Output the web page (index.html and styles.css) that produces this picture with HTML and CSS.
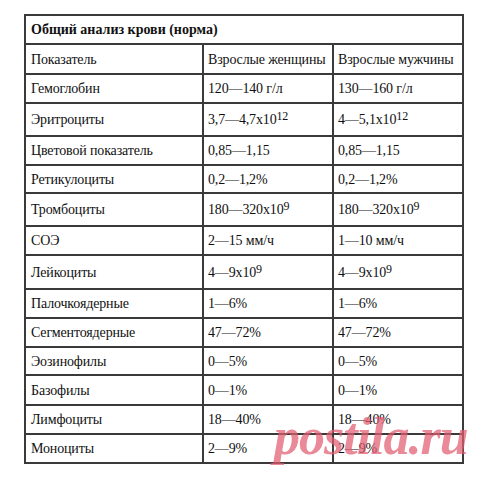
FILE: index.html
```html
<!DOCTYPE html>
<html>
<head>
<meta charset="utf-8">
<title>Общий анализ крови (норма)</title>
<link rel="stylesheet" href="styles.css">
</head>
<body>
<div class="page">
  <table class="norms">
    <colgroup>
      <col class="c1"><col class="c2"><col class="c3">
    </colgroup>
    <tr class="h29"><td colspan="3" class="title">Общий анализ крови (норма)</td></tr>
    <tr class="h30"><td>Показатель</td><td>Взрослые женщины</td><td>Взрослые мужчины</td></tr>
    <tr class="h29"><td>Гемоглобин</td><td>120—140 г/л</td><td>130—160 г/л</td></tr>
    <tr class="h33"><td>Эритроциты</td><td>3,7—4,7x10<sup>12</sup></td><td>4—5,1x10<sup>12</sup></td></tr>
    <tr class="h29"><td>Цветовой показатель</td><td>0,85—1,15</td><td>0,85—1,15</td></tr>
    <tr class="h28"><td>Ретикулоциты</td><td>0,2—1,2%</td><td>0,2—1,2%</td></tr>
    <tr class="h33"><td>Тромбоциты</td><td>180—320x10<sup>9</sup></td><td>180—320x10<sup>9</sup></td></tr>
    <tr class="h29"><td>СОЭ</td><td>2—15 мм/ч</td><td>1—10 мм/ч</td></tr>
    <tr class="h34"><td>Лейкоциты</td><td>4—9x10<sup>9</sup></td><td>4—9x10<sup>9</sup></td></tr>
    <tr class="h29"><td>Палочкоядерные</td><td>1—6%</td><td>1—6%</td></tr>
    <tr class="h29"><td>Сегментоядерные</td><td>47—72%</td><td>47—72%</td></tr>
    <tr class="h28"><td>Эозинофилы</td><td>0—5%</td><td>0—5%</td></tr>
    <tr class="h30"><td>Базофилы</td><td>0—1%</td><td>0—1%</td></tr>
    <tr class="h29"><td>Лимфоциты</td><td>18—40%</td><td>18—40%</td></tr>
    <tr class="h29"><td>Моноциты</td><td>2—9%</td><td>2—9%</td></tr>
  </table>
  <div class="watermark">postila.ru</div>
</div>
</body>
</html>
```

FILE: styles.css
```css
html, body {
  margin: 0;
  padding: 0;
  background: #ffffff;
}

.page {
  position: relative;
  width: 489px;
  height: 479px;
  padding: 14px 0 0 24px;
  box-sizing: border-box;
  font-family: "Liberation Serif", serif;
  color: #111111;
}

.norms {
  table-layout: fixed;
  width: 440px;
  border-collapse: separate;
  border-spacing: 0;
  border-top: 2px solid #3a3a3a;
  border-left: 2px solid #3a3a3a;
  font-size: 14px;
}

.c1 { width: 178px; }
.c2 { width: 130px; }
.c3 { width: 130px; }

.norms td {
  box-sizing: border-box;
  border-right: 2px solid #3a3a3a;
  border-bottom: 2px solid #3a3a3a;
  padding: 0 2px 0 4px;
  vertical-align: middle;
  white-space: nowrap;
  line-height: 17px;
  letter-spacing: -0.15px;
}

.norms td:first-child {
  padding-left: 5px;
}

.norms td.title {
  font-weight: bold;
  letter-spacing: 0;
}

.norms sup {
  font-size: 12px;
  line-height: 0;
  vertical-align: 4px;
}

.h28 td { height: 28px; }
.h29 td { height: 29px; }
.h30 td { height: 30px; }
.h33 td { height: 33px; }
.h34 td { height: 34px; }

.watermark {
  position: absolute;
  left: 274px;
  top: 407px;
  font-family: "Liberation Serif", serif;
  font-weight: bold;
  font-style: italic;
  font-size: 52px;
  line-height: 60px;
  letter-spacing: -1px;
  color: rgba(226, 92, 112, 0.72);
}
```
